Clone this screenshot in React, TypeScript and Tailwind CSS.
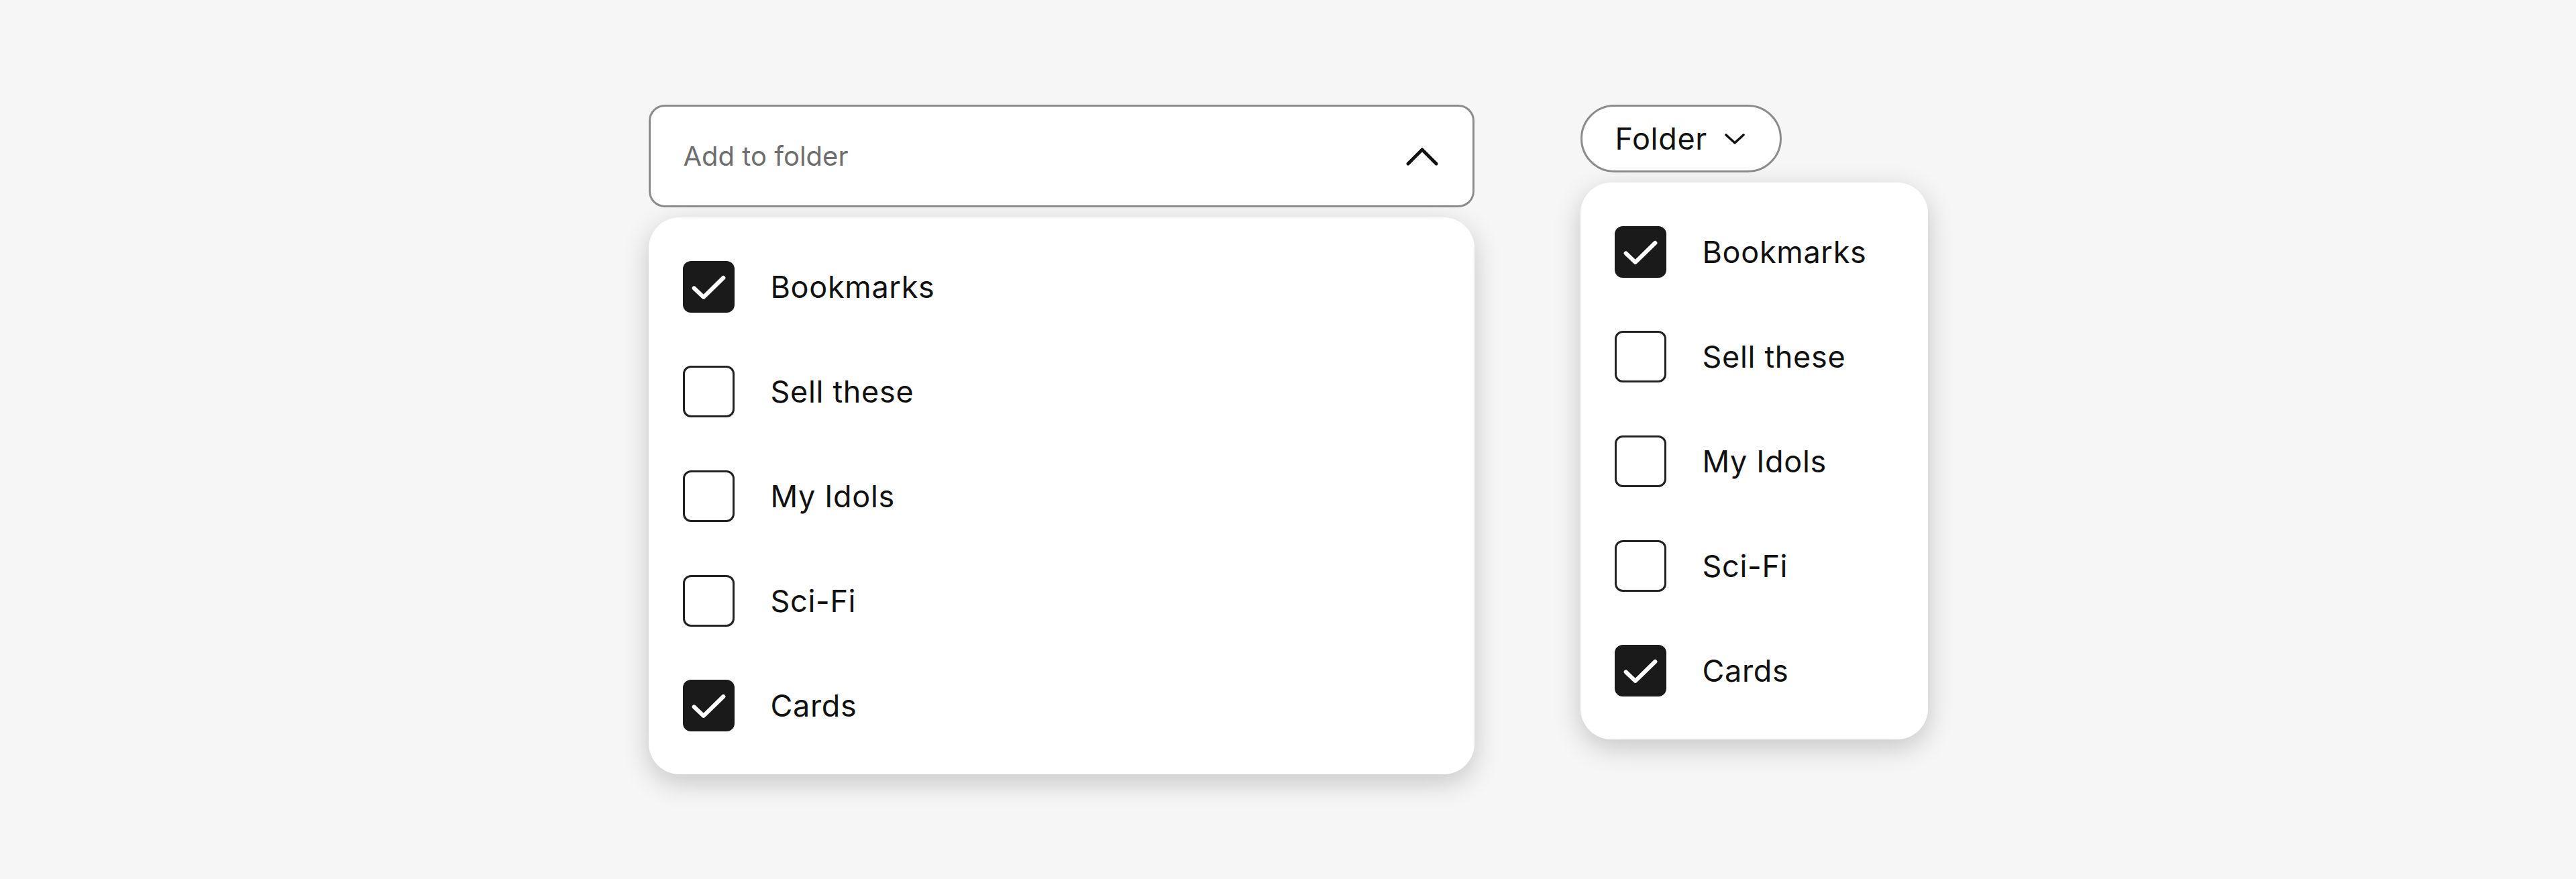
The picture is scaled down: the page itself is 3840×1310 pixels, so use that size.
import React from "react";

// Two folder pickers side by side: a full-width select that is open, and a
// compact pill button with its menu below it.

type Folder = { name: string; checked: boolean };

const folders: Folder[] = [
  { name: "Bookmarks", checked: true },
  { name: "Sell these", checked: false },
  { name: "My Idols", checked: false },
  { name: "Sci-Fi", checked: false },
  { name: "Cards", checked: true },
];

const font = { fontFamily: "Inter, 'Noto Sans', sans-serif" };

function Box({ checked }: { checked: boolean }) {
  if (checked) {
    return (
      <span className="flex h-[77px] w-[77px] shrink-0 items-center justify-center rounded-[12px] bg-[#1a1a1a]">
        <svg viewBox="0 0 24 24" className="h-[77px] w-[77px]" fill="none" stroke="#fff"
          strokeWidth={1.9} strokeLinecap="round" strokeLinejoin="round">
          <path d="M5.2 12.6 9.6 16.8 18.8 7.8" />
        </svg>
      </span>
    );
  }
  return <span className="h-[77px] w-[77px] shrink-0 rounded-[12px] border-[3px] border-[#222] bg-white" />;
}

function Menu() {
  return (
    <div className="w-full rounded-[46px] bg-white py-[25px] shadow-[0_12px_40px_rgba(0,0,0,0.2)]">
      {folders.map((f) => (
        <div key={f.name} className="flex h-[156px] items-center gap-[54px] pl-[51px]">
          <Box checked={f.checked} />
          <span className="text-[45px] leading-none tracking-[0.015em] text-[#111]">{f.name}</span>
        </div>
      ))}
    </div>
  );
}

export default function App() {
  return (
    <div className="flex h-[1310px] w-full items-center justify-center bg-[#f6f6f6]" style={font}>
      <div className="flex items-start gap-[158px]">
        <div className="flex w-[1231px] flex-col gap-[15px]">
          <div className="flex h-[153px] items-center justify-between rounded-[24px] border-[3px] border-[#8c8c8c] bg-white pl-[49px] pr-[51px]">
            <span className="text-[40px] leading-none text-[#6e6e6e]">Add to folder</span>
            <svg viewBox="0 0 48 28" className="h-[28px] w-[48px]" fill="none" stroke="#111"
              strokeWidth={5} strokeLinecap="round" strokeLinejoin="round">
              <path d="M3 25 24 4 45 25" />
            </svg>
          </div>
          <Menu />
        </div>

        <div className="flex w-[518px] flex-col items-start gap-[15px]">
          <button className="flex h-[101px] w-[300px] items-center gap-[26px] rounded-full border-[3px] border-[#8c8c8c] bg-white pl-[49px]">
            <span className="text-[45px] leading-none tracking-[0.015em] text-[#111]">Folder</span>
            <svg viewBox="0 0 30 16" className="h-[16px] w-[30px]" fill="none" stroke="#111"
              strokeWidth={3.5} strokeLinecap="round" strokeLinejoin="round">
              <path d="M2 2 15 14 28 2" />
            </svg>
          </button>
          <Menu />
        </div>
      </div>
    </div>
  );
}
